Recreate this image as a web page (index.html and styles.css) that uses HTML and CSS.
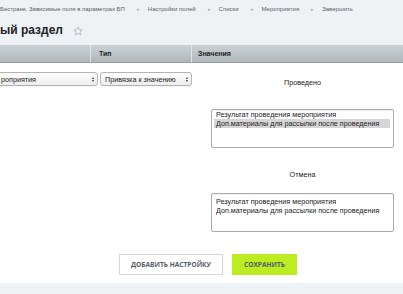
FILE: index.html
```html
<!DOCTYPE html>
<html>
<head>
<meta charset="utf-8">
<link rel="stylesheet" href="styles.css">
</head>
<body>
<div class="page">
  <div class="top">
    <div class="crumbs">
      <span>Бестранк. Зависимые поля в параметрах БП</span><span class="sep">&#9656;</span>
      <span>Настройки полей</span><span class="sep">&#9656;</span>
      <span>Списки</span><span class="sep">&#9656;</span>
      <span>Мероприятия</span><span class="sep">&#9656;</span>
      <span>Завершить</span>
    </div>
    <div class="title-row">
      <h1 class="title">ый раздел</h1>
      <svg class="star" width="10" height="10" viewBox="0 0 20 20"><path d="M10 1.8l2.5 5.4 5.9.7-4.4 4 1.2 5.8L10 14.8l-5.2 2.9 1.2-5.8-4.4-4 5.9-.7z" fill="none" stroke="#a7b0b8" stroke-width="1.6" stroke-linejoin="round"/></svg>
    </div>
  </div>
  <div class="content">
    <div class="grid">
      <div class="th th1"></div>
      <div class="th th2">Тип</div>
      <div class="th th3">Значения</div>
      <div class="td">
        <div class="sel sel1"><span class="sel-text">роприятия</span><span class="arr"><i class="up"></i><i class="dn"></i></span></div>
      </div>
      <div class="td">
        <div class="sel sel2"><span class="sel-text">Привязка к значению</span><span class="arr"><i class="up"></i><i class="dn"></i></span></div>
      </div>
      <div class="td vals">
        <div class="lbl lbl1">Проведено</div>
        <div class="listbox lb1">
          <div class="opt">Результат проведения мероприятия</div>
          <div class="opt picked">Доп.материалы для рассылки после проведения</div>
        </div>
        <div class="lbl lbl2">Отмена</div>
        <div class="listbox lb2">
          <div class="opt">Результат проведения мероприятия</div>
          <div class="opt">Доп.материалы для рассылки после проведения</div>
        </div>
      </div>
    </div>
    <div class="buttons">
      <div class="btn btn-add">Добавить настройку</div>
      <div class="btn btn-save">Сохранить</div>
    </div>
  </div>
</div>
</body>
</html>
```
FILE: styles.css
```css
html, body {
  margin: 0;
  padding: 0;
  background: #eef2f4;
}
body {
  width: 403px;
  height: 294px;
  overflow: hidden;
  font-family: "Liberation Sans", Arial, sans-serif;
}
.page {
  width: 403px;
}
.top {
  height: 45px;
  display: flex;
  flex-direction: column;
}
.crumbs {
  padding-top: 5px;
  font-size: 6px;
  line-height: 8px;
  color: #56606b;
  white-space: nowrap;
  display: flex;
  align-items: center;
}
.crumbs .sep {
  font-size: 5px;
  color: #a3acb4;
  margin: 0 8px 0 12px;
}
.title-row {
  margin-top: 8px;
  display: flex;
  align-items: center;
  height: 18px;
}
.title {
  margin: 0;
  font-size: 12px;
  line-height: 18px;
  font-weight: bold;
  color: #1d2227;
}
.star {
  margin-left: 10px;
  margin-top: 1px;
}
.content {
  background: #fff;
  padding-bottom: 8px;
}
.grid {
  display: grid;
  grid-template-columns: 91px 101px 1fr;
}
.th {
  height: 17px;
  line-height: 18px;
  font-size: 7px;
  font-weight: bold;
  color: #1e2326;
  background: linear-gradient(#cbd2d5, #aeb8bb);
  border-bottom: 1px solid #97a1a4;
  box-sizing: content-box;
}
.th1, .th2 {
  border-right: 1px solid #dfe4e6;
}
.th2 { padding-left: 8px; }
.th3 { padding-left: 6px; }
.td {
  padding-top: 9px;
}
.sel {
  height: 12px;
  border: 1px solid #b3b3b3;
  border-radius: 3px;
  background: linear-gradient(#ffffff, #ededed);
  display: flex;
  align-items: center;
  justify-content: space-between;
  font-size: 7.2px;
  color: #222;
  box-shadow: 0 0.5px 0.5px rgba(0,0,0,0.08);
}
.sel1 {
  margin-left: -6px;
  width: 93px;
  padding-left: 6px;
  padding-right: 3px;
}
.sel2 {
  margin-left: 9px;
  width: 83px;
  padding-left: 4px;
  padding-right: 3px;
}
.sel-text {
  white-space: nowrap;
}
.arr {
  display: flex;
  flex-direction: column;
  gap: 1px;
  align-items: center;
}
.arr i {
  display: block;
  width: 0;
  height: 0;
  border-left: 1.5px solid transparent;
  border-right: 1.5px solid transparent;
}
.arr .up { border-bottom: 2.5px solid #333; }
.arr .dn { border-top: 2.5px solid #333; }
.vals {
  padding-top: 0;
  padding-left: 19px;
  padding-right: 9px;
  display: flex;
  flex-direction: column;
}
.lbl {
  text-align: center;
  font-size: 7.2px;
  line-height: 10px;
  color: #222;
}
.lbl1 { margin-top: 15px; }
.lbl2 { margin-top: 22px; }
.listbox {
  height: 37px;
  border: 1px solid #aaaaaa;
  border-radius: 2px;
  padding: 0 3px 0 2px;
  box-shadow: inset 0 1px 1px rgba(0,0,0,0.06);
  font-size: 7.2px;
  line-height: 9px;
  color: #222;
}
.lb1 { margin-top: 21px; }
.lb2 { margin-top: 13px; padding-top: 3px; height: 34px; }
.opt {
  padding-left: 2px;
  white-space: nowrap;
}
.opt.picked {
  background: #d6d6d6;
}
.buttons {
  margin-top: 22px;
  padding-left: 119px;
  display: flex;
  gap: 9px;
}
.btn {
  height: 21px;
  box-sizing: border-box;
  display: flex;
  align-items: center;
  justify-content: center;
  font-family: "Open Sans", sans-serif;
  font-weight: bold;
  font-size: 6.6px;
  text-transform: uppercase;
  color: #535c69;
}
.btn-add {
  width: 104px;
  background: #fff;
  border: 1px solid #d3d8dc;
}
.btn-save {
  width: 65px;
  background: #bbed21;
}
```
